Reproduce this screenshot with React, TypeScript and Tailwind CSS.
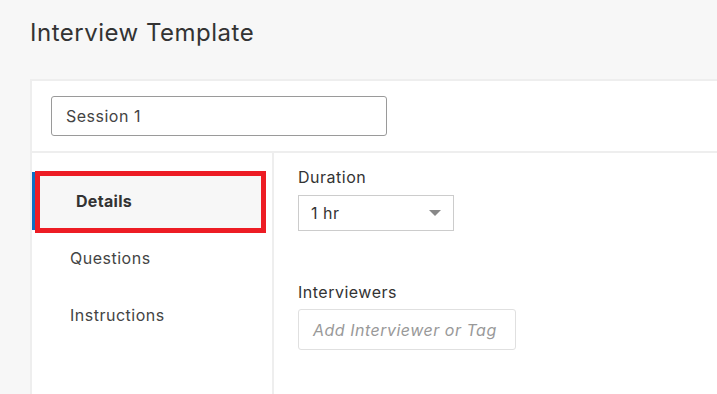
import React from 'react';

export default function App() {
  const font = { fontFamily: 'Inter, "Noto Sans", sans-serif' };
  return (
    <div style={font} className="h-[394px] w-full overflow-hidden bg-[#f7f7f7] pl-[30px]">
      {/* Header */}
      <div className="h-[79px] pt-[18px]">
        <h1 className="text-[24px] leading-[30px] tracking-[0.5px] text-[#333]">Interview Template</h1>
      </div>

      {/* Card */}
      <div className="flex h-[315px] flex-col border-l-2 border-t-2 border-[#eeeeee] bg-white tracking-[0.5px]">
        <div className="h-[70px] shrink-0 pl-[19px] pt-[15px]">
          <div className="flex h-[40px] w-[336px] items-center rounded-[3px] border border-[#9a9a9a] px-[14px] text-[16px] text-[#444]">
            Session 1
          </div>
        </div>
        <div className="h-[2px] shrink-0 bg-[#eeeeee]" />

        <div className="flex flex-1">
          {/* Sidebar */}
          <div className="w-[242px] shrink-0 border-r-2 border-[#eeeeee] pt-[19px]">
            <div className="relative mr-[6px] flex h-[58px] items-center border-l-[3px] border-[#0b6fc4] bg-[#f7f7f7] pl-[41px] text-[16px] font-bold tracking-[0.3px] text-[#333]">
              Details
              <div className="pointer-events-none absolute left-0 top-[-1px] h-[62px] w-[231px] border-[5px] border-[#ed1c24]" />
            </div>
            <div className="flex h-[56px] items-center pl-[38px] text-[16px] text-[#444]">Questions</div>
            <div className="flex h-[58px] items-center pl-[38px] text-[16px] text-[#444]">Instructions</div>
          </div>

          {/* Content */}
          <div className="flex-1 pl-[24px] pt-[14px]">
            <div className="text-[16px] leading-[20px] text-[#333]">Duration</div>
            <div className="mt-[8px] flex h-[36px] w-[156px] items-center justify-between border border-[#cccccc] pl-[12px] pr-[12px] text-[16px] text-[#333]">
              <span>1 hr</span>
              <svg width="12" height="7" viewBox="0 0 12 7">
                <path d="M0 0 L12 0 L6 6 Z" fill="#888" />
              </svg>
            </div>
            <div className="mt-[51px] text-[16px] leading-[20px] text-[#333]">Interviewers</div>
            <div className="mt-[7px] flex h-[41px] w-[218px] items-center rounded-[3px] border border-[#e0e0e0] pl-[14px] text-[16px] italic text-[#999]">
              Add Interviewer or Tag
            </div>
          </div>
        </div>
      </div>
    </div>
  );
}
